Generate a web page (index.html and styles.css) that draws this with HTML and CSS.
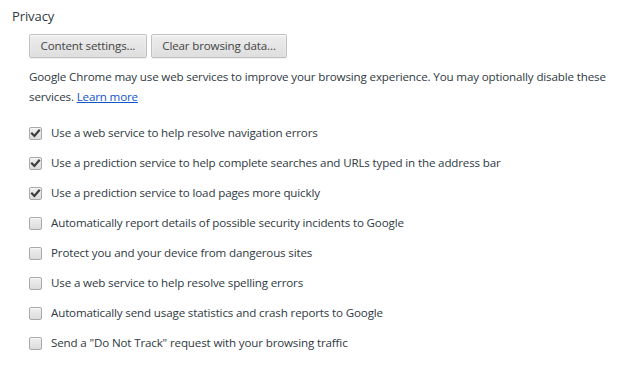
FILE: index.html
```html
<!DOCTYPE html>
<html lang="en">
<head>
<meta charset="utf-8">
<title>Privacy</title>
<link rel="stylesheet" href="styles.css">
</head>
<body>
<section class="privacy">
  <h3 class="section-title">Privacy</h3>
  <div class="section-body">
    <div class="buttons">
      <button class="btn" type="button">Content settings...</button>
      <button class="btn" type="button">Clear browsing data...</button>
    </div>
    <p class="desc">Google Chrome may use web services to improve your browsing experience. You may optionally disable these services. <a href="#" class="link">Learn more</a></p>
    <ul class="options">
      <li class="option"><span class="cb checked"><svg viewBox="0 0 13 13" width="13" height="13"><path d="M3 6.6 L5.4 9 L10 3.6" fill="none" stroke="#3c3c3c" stroke-width="2.2" stroke-linecap="square"/></svg></span><span class="label">Use a web service to help resolve navigation errors</span></li>
      <li class="option"><span class="cb checked"><svg viewBox="0 0 13 13" width="13" height="13"><path d="M3 6.6 L5.4 9 L10 3.6" fill="none" stroke="#3c3c3c" stroke-width="2.2" stroke-linecap="square"/></svg></span><span class="label">Use a prediction service to help complete searches and URLs typed in the address bar</span></li>
      <li class="option"><span class="cb checked"><svg viewBox="0 0 13 13" width="13" height="13"><path d="M3 6.6 L5.4 9 L10 3.6" fill="none" stroke="#3c3c3c" stroke-width="2.2" stroke-linecap="square"/></svg></span><span class="label">Use a prediction service to load pages more quickly</span></li>
      <li class="option"><span class="cb"></span><span class="label">Automatically report details of possible security incidents to Google</span></li>
      <li class="option"><span class="cb"></span><span class="label">Protect you and your device from dangerous sites</span></li>
      <li class="option"><span class="cb"></span><span class="label">Use a web service to help resolve spelling errors</span></li>
      <li class="option"><span class="cb"></span><span class="label">Automatically send usage statistics and crash reports to Google</span></li>
      <li class="option"><span class="cb"></span><span class="label">Send a "Do Not Track" request with your browsing traffic</span></li>
    </ul>
  </div>
</section>
</body>
</html>
```
FILE: styles.css
```css
html, body {
  margin: 0;
  padding: 0;
  background: #ffffff;
}
body {
  font-family: "Open Sans", "Noto Sans", sans-serif;
  font-size: 11.6px;
  letter-spacing: -0.15px;
  color: #303942;
}
.privacy {
  padding: 7px 0 0 12px;
}
.section-title {
  margin: 0;
  font-size: 13px;
  font-weight: normal;
  line-height: 18px;
  letter-spacing: -0.1px;
  color: #303942;
}
.section-body {
  padding-left: 17px;
}
.buttons {
  display: flex;
  gap: 4px;
  margin-top: 9px;
}
.btn {
  font-family: inherit;
  font-size: 11.6px;
  letter-spacing: -0.15px;
  color: #444444;
  height: 24px;
  padding: 0 10.5px;
  border: 1px solid #c1c1c1;
  border-radius: 2px;
  background: linear-gradient(#ededed, #dedede);
  box-shadow: 0 1px 0 rgba(0,0,0,0.06), inset 0 1px 2px rgba(255,255,255,0.75);
  line-height: 20px;
}
.desc {
  margin: 9px 0 0 0;
  line-height: 20px;
  padding-right: 6px;
}
.link {
  color: #1155cc;
  text-decoration: underline;
}
.options {
  list-style: none;
  margin: 11px 0 0 0;
  padding: 0;
}
.option {
  display: flex;
  align-items: center;
  height: 30px;
}
.cb {
  width: 11px;
  height: 11px;
  border: 1px solid #a9a9a9;
  border-radius: 2px;
  background: linear-gradient(#efefef, #dcdcdc);
  box-shadow: inset 0 1px 1px rgba(255,255,255,0.6);
  margin-right: 9px;
  position: relative;
  flex: none;
}
.cb svg {
  position: absolute;
  left: -1px;
  top: -1px;
}
.label {
  line-height: 20px;
}
```
